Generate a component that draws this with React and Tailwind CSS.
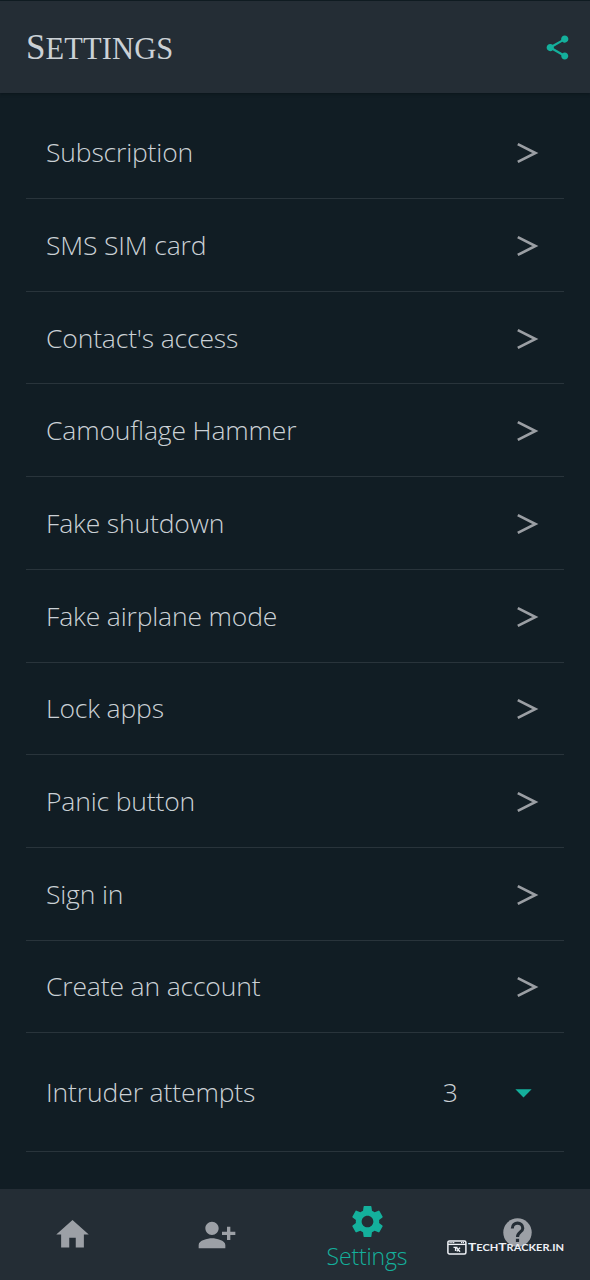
import { MdShare, MdHome, MdPersonAddAlt1, MdSettings, MdArrowDropDown } from 'react-icons/md';

const items = [
  'Subscription',
  'SMS SIM card',
  "Contact's access",
  'Camouflage Hammer',
  'Fake shutdown',
  'Fake airplane mode',
  'Lock apps',
  'Panic button',
  'Sign in',
  'Create an account',
];

function Chevron() {
  return (
    <svg className="mt-[2px] h-[22px] w-[22px]" viewBox="0 0 22 22" fill="none" stroke="#9b9fa4" strokeWidth="2.7">
      <path d="M0.8 2.1 L18.4 11 L0.8 19.9" />
    </svg>
  );
}

function HelpIcon() {
  return (
    <svg className="h-[29px] w-[29px]" viewBox="0 0 29 29">
      <circle cx="14.5" cy="14.5" r="14.2" fill="currentColor" />
      <path
        d="M9.3 10.4C9.3 3.4 19.8 3.4 19.8 10.2C19.8 14 14.5 14 14.5 19"
        fill="none"
        stroke="#242d35"
        strokeWidth="3.1"
      />
      <rect x="12.9" y="20.8" width="3.2" height="3.2" fill="#242d35" />
    </svg>
  );
}

function Watermark() {
  return (
    <div className="absolute top-[1238px] left-[447px] flex items-center text-[#eef1f6]">
      <svg className="h-[15px] w-[20px]" viewBox="0 0 20 15" fill="none" stroke="currentColor">
        <rect x="0.9" y="0.9" width="18" height="13" rx="1.5" strokeWidth="1.5" />
        <path d="M1 4.4H19" strokeWidth="1.3" />
        <path d="M2.5 2.6H7.5M14 2.6H17.5" strokeWidth="1.2" strokeDasharray="1.2 0.6" />
        <path d="M6.5 7.4H10.5M8.6 7.4V11M9.8 8L13 11.8M13 7.6L9.8 11.4" strokeWidth="1.4" />
      </svg>
      <span className="mt-[1px] ml-[1px] origin-left scale-x-[1.165] font-['Lato'] text-[11.8px] leading-[16px] font-bold whitespace-nowrap">
        T<span className="text-[9.5px]">ECH</span>T<span className="text-[9.5px]">RACKER.IN</span>
      </span>
    </div>
  );
}

export default function App() {
  return (
    <div className="relative flex h-[1280px] w-[590px] flex-col overflow-hidden bg-[#111d24] font-['Open_Sans',sans-serif] font-light text-[#cbd1d6]">
      <header className="mt-[1px] flex h-[92px] shrink-0 items-center justify-between bg-[#242d35] pr-[18px] pl-[26px] shadow-[0_1px_3px_#0b151b]">
        <h1 className="mt-[2px] font-['Liberation_Serif',serif] text-[35px] leading-[40px] font-normal tracking-[0.1px]">
          S<span className="text-[30.5px]">ETTINGS</span>
        </h1>
        <MdShare className="h-[29px] w-[29px] text-[#14b09c]" />
      </header>
      <main className="flex flex-1 flex-col px-[26px] pt-[13.4px]">
        {items.map((item) => (
          <div key={item} className="flex h-[92.7px] shrink-0 items-center justify-between border-b border-[#29343b] pr-[25px] pl-[20px]">
            <span className="text-[26.5px] leading-[36px] tracking-[-0.16px]">{item}</span>
            <Chevron />
          </div>
        ))}
        <div className="flex h-[118.6px] shrink-0 items-center border-b border-[#29343b] pr-[21px] pl-[20px]">
          <span className="flex-1 text-[26.5px] leading-[36px] tracking-[-0.12px]">Intruder attempts</span>
          <span className="mr-[46px] text-[26.5px] leading-[36px]">3</span>
          <MdArrowDropDown className="h-[39px] w-[39px] text-[#14b09c]" />
        </div>
      </main>
      <nav className="flex h-[91px] shrink-0 bg-[#242d35] text-[#9ca0a6]">
        <div className="flex w-[144px] items-center justify-center">
          <MdHome className="h-[39px] w-[39px]" />
        </div>
        <div className="flex w-[145px] items-center justify-center">
          <MdPersonAddAlt1 className="h-[40px] w-[40px]" />
        </div>
        <div className="flex w-[156px] flex-col items-center pt-[13px] text-[#14b09c]">
          <MdSettings className="h-[39px] w-[39px]" />
          <span className="text-[23px] leading-[30px] tracking-[-0.15px]">Settings</span>
        </div>
        <div className="flex w-[145px] items-start justify-center pt-[29px]">
          <HelpIcon />
        </div>
      </nav>
      <Watermark />
    </div>
  );
}
